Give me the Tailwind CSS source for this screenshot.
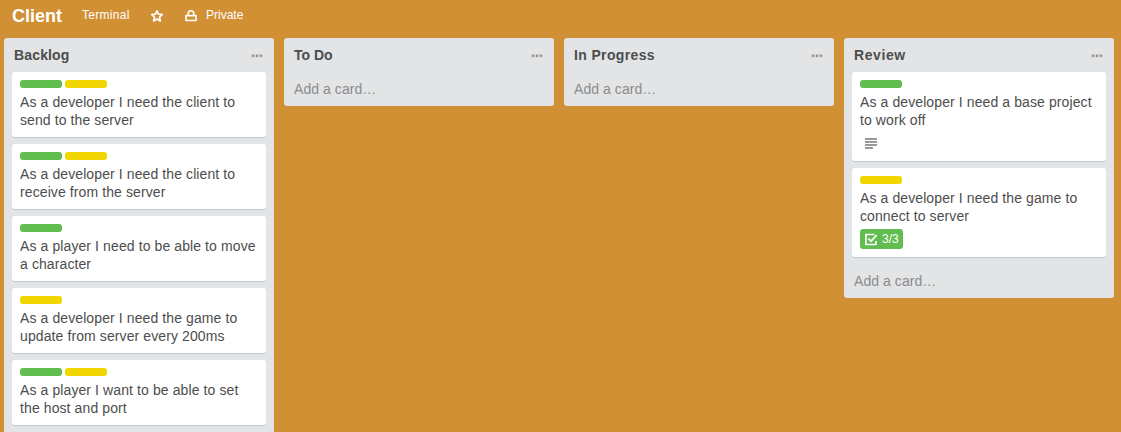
<!DOCTYPE html>
<html lang="en">
<head>
<meta charset="utf-8">
<title>Client</title>
<script src="https://cdn.jsdelivr.net/npm/@tailwindcss/browser@4"></script>
</head>
<body class="h-[432px] overflow-hidden bg-[#d29034] font-['Liberation_Sans',Arial,sans-serif] text-[14px] leading-[18px] text-[#4d4d4d]">
<header class="flex h-[38px] items-center pb-[6px] pl-3 text-[12px] text-white">
  <h1 class="w-[70px] text-[18px] font-bold leading-6">Client</h1>
  <span class="w-[68px] pb-0.5 tracking-[0.3px]">Terminal</span>
  <svg class="mr-[20px] h-[14px] w-[14px]" viewBox="0 0 14 14" fill="none" stroke="#fff" stroke-width="1.7" stroke-linejoin="round"><path d="M7 1.900l1.500 3.300 3.700.4-2.700 2.500.8 3.900L7 10.100l-3.300 1.900.8-3.900L1.800 5.600l3.700-.4z"/></svg>
  <svg class="mr-[8px] h-[14px] w-[14px]" viewBox="0 0 14 14" fill="none" stroke="#fff" stroke-width="1.600" stroke-linejoin="round"><path d="M2 6.600h10v4.900H2zM4.200 6.500V4.600a2.800 2.800 0 0 1 5.600 0v1.900"/></svg>
  <span class="pb-0.5">Private</span>
</header>
<main class="flex items-start gap-[10px] pl-1" id="board"></main>
<script>
const G = '<i class="h-2 w-[42px] rounded-[3px] bg-[#61bd4f]"></i>';
const Y = '<i class="h-2 w-[42px] rounded-[3px] bg-[#f2d600]"></i>';
const lines = '<svg class="mt-[9px] mb-[4px] ml-[5px] h-[11px] w-[12px]" viewBox="0 0 12 11" fill="#999"><path d="M0 0h12v2H0zM0 3h12v2H0zM0 6h12v2H0zM0 9h8v2H0z"/></svg>';
const check = '<div class="mt-1 flex h-5 w-[43px] items-center gap-[4px] rounded-[3px] bg-[#61bd4f] pl-[4px] text-[12px] text-white"><svg class="h-[14px] w-[14px]" viewBox="0 0 14 14" fill="none" stroke="#fff" stroke-width="1.700"><path d="M10.500 2.500H1.900v10h10V9M4.300 6.500l2.700 2.700 5.700-6"/></svg>3/3</div>';
const card = (labels, text, extra = '') => `<article class="mb-[7px] rounded-[3px] bg-white p-2 shadow-[0_1px_0_#c4c9cc]"><div class="mb-[5px] flex gap-[3px]">${labels}</div><p class="whitespace-nowrap tracking-[0.1px]">${text}</p>${extra}</article>`;
const add = '<div class="h-[34px] px-0.5 pt-2 tracking-[0.06px] text-[#8c8c8c]">Add a card…</div>';
const list = (title, spacing, cards, footer = add) => `<section class="w-[270px] shrink-0 rounded-[3px] bg-[#e2e4e6] px-2"><div class="flex h-[34px] items-center justify-between px-0.5"><h2 class="font-bold ${spacing}">${title}</h2><svg class="mt-[2px] mr-[1px] h-[4px] w-[12px]" viewBox="0 0 12 4" fill="#999"><circle cx="2" cy="1.700" r="1.500"/><circle cx="6" cy="1.700" r="1.500"/><circle cx="10" cy="1.700" r="1.500"/></svg></div>${cards}${footer}</section>`;
document.getElementById('board').innerHTML =
 list('Backlog', 'tracking-[0.15px]', card(G+Y,'As a developer I need the client to<br>send to the server') + card(G+Y,'As a developer I need the client to<br>receive from the server') + card(G,'As a player I need to be able to move<br>a character') + card(Y,'As a developer I need the game to<br>update from server every 200ms') + card(G+Y,'As a player I want to be able to set<br>the host and port'), '<div class="h-2"></div>') +
 list('To Do', 'tracking-normal', '') + list('In Progress', 'tracking-[0.36px]', '') +
 list('Review', 'tracking-[0.6px]', card(G,'As a developer I need a base project<br>to work off',lines) + card(Y,'As a developer I need the game to<br>connect to server',check));
</script>
</body>
</html>
